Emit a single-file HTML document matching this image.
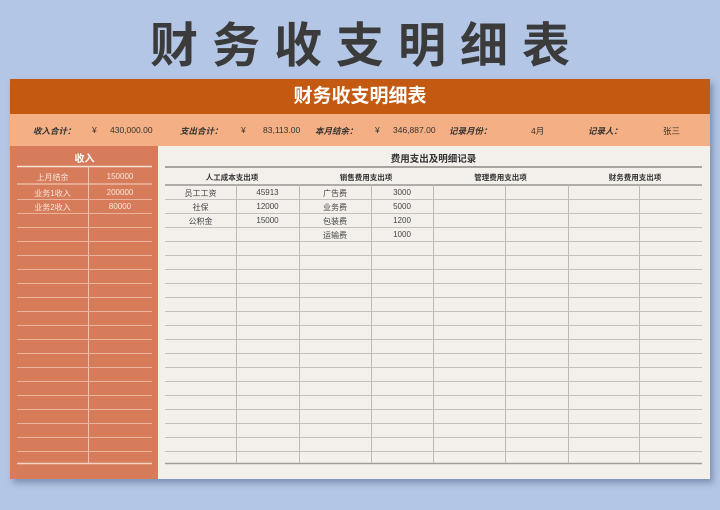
<!DOCTYPE html>
<html><head><meta charset="utf-8"><style>
*{margin:0;padding:0;box-sizing:border-box}
body{width:720px;height:510px;background:#b3c6e5;position:relative;overflow:hidden;font-family:"Liberation Sans","Noto Sans CJK SC",sans-serif}
.a{position:absolute}
.big{left:0;width:720px;top:9px;text-align:center;font-size:48px;font-weight:bold;color:#3b3b3b;letter-spacing:14px;padding-left:14px;line-height:64px;font-family:"Noto Sans CJK SC",sans-serif}
.sheet{left:10px;top:79px;width:700px;height:400px;background:#f3f0ec;box-shadow:3px 4px 6px rgba(60,80,120,.45)}
.hdr{left:10px;top:79px;width:700px;height:35px;background:#c45911;color:#fff;font-size:19px;font-weight:bold;text-align:center;line-height:36px}
.sum{left:10px;top:114px;width:700px;height:32px;background:#f4b084;font-size:8.5px;color:#333}
.sum span{position:absolute;top:11px}
.sum b{font-style:italic}
.left{left:10px;top:146px;width:148px;height:333px;background:#d67c5a}
.lt{left:17px;top:150px;width:135px;text-align:center;color:#fff;font-size:10px;font-weight:bold}
.rt{left:165px;top:151px;width:537px;text-align:center;font-size:9.5px;font-weight:bold;color:#333}
.c{position:absolute;font-size:8px;color:#444;text-align:center}
.lc{position:absolute;font-size:8px;color:#fbe6dc;text-align:center}
.h{position:absolute;font-size:7.5px;font-weight:bold;color:#333;text-align:center;top:172px}
</style></head><body>
<div class="a big">财务收支明细表</div>
<div class="a sheet"></div>
<div class="a hdr">财务收支明细表</div>
<div class="a sum">
<span style="left:23px"><b>收入合计：</b></span><span style="left:82px">¥</span><span style="left:100px">430,000.00</span>
<span style="left:170px"><b>支出合计：</b></span><span style="left:231px">¥</span><span style="left:253px">83,113.00</span>
<span style="left:305px"><b>本月结余：</b></span><span style="left:365px">¥</span><span style="left:383px">346,887.00</span>
<span style="left:439px"><b>记录月份：</b></span><span style="left:521px">4月</span>
<span style="left:578px"><b>记录人：</b></span><span style="left:653px">张三</span>
</div>
<div class="a left"></div>
<div class="a lt">收入</div>
<svg class="a" style="left:0;top:0" width="720" height="510">
<g stroke="#f0c4b2" stroke-width="1">
<line x1="17" y1="166.5" x2="152" y2="166.5" stroke="#f8e2d8" stroke-width="1.5"/>
<line x1="17" y1="184" x2="152" y2="184" stroke-width="1.3"/>
<line x1="88.5" y1="167" x2="88.5" y2="463"/>
</g>
<line x1="17" y1="463.5" x2="152" y2="463.5" stroke="#f5d3c4" stroke-width="1.6"/>
<g stroke="#8e8a87">
<line x1="165" y1="167" x2="702" y2="167" stroke-width="1.4"/>
<line x1="165" y1="185" x2="702" y2="185" stroke-width="1.4" stroke="#9a9693"/>
<line x1="165" y1="463.5" x2="702" y2="463.5" stroke-width="1.6" stroke="#a09c99"/>
</g>
<g stroke="#bdb9b5" stroke-width="1">
<line x1="236.5" y1="185" x2="236.5" y2="463"/>
<line x1="299.5" y1="185" x2="299.5" y2="463"/>
<line x1="371.5" y1="185" x2="371.5" y2="463"/>
<line x1="433.5" y1="185" x2="433.5" y2="463"/>
<line x1="505.5" y1="185" x2="505.5" y2="463"/>
<line x1="568.5" y1="185" x2="568.5" y2="463"/>
<line x1="639.5" y1="185" x2="639.5" y2="463"/>
</g>
<g stroke="#c4c0bc" stroke-width="1">
<line x1="165" x2="702" y1="199.5" y2="199.5"/><line x1="165" x2="702" y1="213.5" y2="213.5"/>
<line x1="165" x2="702" y1="227.5" y2="227.5"/><line x1="165" x2="702" y1="241.5" y2="241.5"/>
<line x1="165" x2="702" y1="255.5" y2="255.5"/><line x1="165" x2="702" y1="269.5" y2="269.5"/>
<line x1="165" x2="702" y1="283.5" y2="283.5"/><line x1="165" x2="702" y1="297.5" y2="297.5"/>
<line x1="165" x2="702" y1="311.5" y2="311.5"/><line x1="165" x2="702" y1="325.5" y2="325.5"/>
<line x1="165" x2="702" y1="339.5" y2="339.5"/><line x1="165" x2="702" y1="353.5" y2="353.5"/>
<line x1="165" x2="702" y1="367.5" y2="367.5"/><line x1="165" x2="702" y1="381.5" y2="381.5"/>
<line x1="165" x2="702" y1="395.5" y2="395.5"/><line x1="165" x2="702" y1="409.5" y2="409.5"/>
<line x1="165" x2="702" y1="423.5" y2="423.5"/><line x1="165" x2="702" y1="437.5" y2="437.5"/>
<line x1="165" x2="702" y1="451.5" y2="451.5"/>
</g>
<g stroke="#e9b39d" stroke-width="1">
<line x1="17" x2="152" y1="199.5" y2="199.5"/><line x1="17" x2="152" y1="213.5" y2="213.5"/>
<line x1="17" x2="152" y1="227.5" y2="227.5"/><line x1="17" x2="152" y1="241.5" y2="241.5"/>
<line x1="17" x2="152" y1="255.5" y2="255.5"/><line x1="17" x2="152" y1="269.5" y2="269.5"/>
<line x1="17" x2="152" y1="283.5" y2="283.5"/><line x1="17" x2="152" y1="297.5" y2="297.5"/>
<line x1="17" x2="152" y1="311.5" y2="311.5"/><line x1="17" x2="152" y1="325.5" y2="325.5"/>
<line x1="17" x2="152" y1="339.5" y2="339.5"/><line x1="17" x2="152" y1="353.5" y2="353.5"/>
<line x1="17" x2="152" y1="367.5" y2="367.5"/><line x1="17" x2="152" y1="381.5" y2="381.5"/>
<line x1="17" x2="152" y1="395.5" y2="395.5"/><line x1="17" x2="152" y1="409.5" y2="409.5"/>
<line x1="17" x2="152" y1="423.5" y2="423.5"/><line x1="17" x2="152" y1="437.5" y2="437.5"/>
<line x1="17" x2="152" y1="451.5" y2="451.5"/>
</g>
</svg>
<div class="lc" style="left:17px;width:71px;top:172px">上月结余</div><div class="lc" style="left:88px;width:64px;top:172px">150000</div>
<div class="lc" style="left:17px;width:71px;top:188px">业务1收入</div><div class="lc" style="left:88px;width:64px;top:188px">200000</div>
<div class="lc" style="left:17px;width:71px;top:202px">业务2收入</div><div class="lc" style="left:88px;width:64px;top:202px">80000</div>
<div class="a rt">费用支出及明细记录</div>
<div class="h" style="left:165px;width:134px">人工成本支出项</div>
<div class="h" style="left:299px;width:134px">销售费用支出项</div>
<div class="h" style="left:433px;width:135px">管理费用支出项</div>
<div class="h" style="left:568px;width:134px">财务费用支出项</div>
<div class="c" style="left:165px;width:71px;top:188px">员工工资</div><div class="c" style="left:236px;width:63px;top:188px">45913</div>
<div class="c" style="left:165px;width:71px;top:202px">社保</div><div class="c" style="left:236px;width:63px;top:202px">12000</div>
<div class="c" style="left:165px;width:71px;top:216px">公积金</div><div class="c" style="left:236px;width:63px;top:216px">15000</div>
<div class="c" style="left:299px;width:72px;top:188px">广告费</div><div class="c" style="left:371px;width:62px;top:188px">3000</div>
<div class="c" style="left:299px;width:72px;top:202px">业务费</div><div class="c" style="left:371px;width:62px;top:202px">5000</div>
<div class="c" style="left:299px;width:72px;top:216px">包装费</div><div class="c" style="left:371px;width:62px;top:216px">1200</div>
<div class="c" style="left:299px;width:72px;top:230px">运输费</div><div class="c" style="left:371px;width:62px;top:230px">1000</div>
</body></html>
